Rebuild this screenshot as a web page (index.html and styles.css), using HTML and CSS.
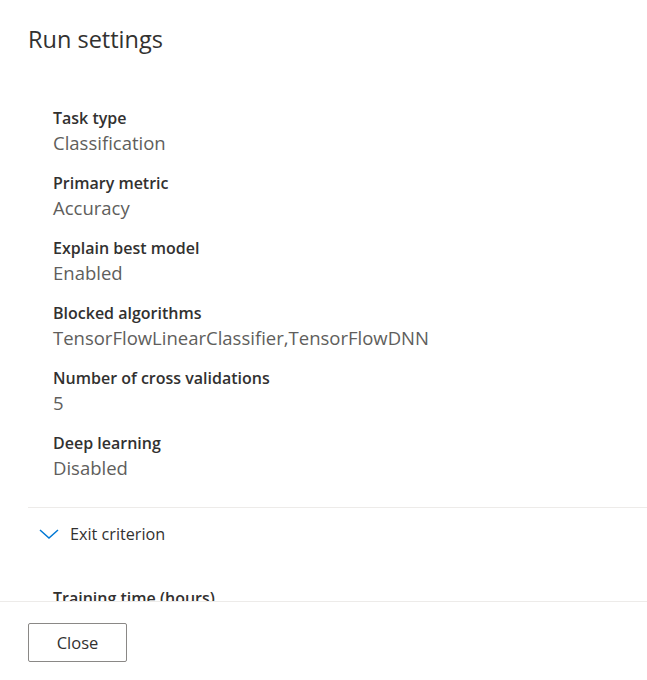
FILE: index.html
```html
<!DOCTYPE html>
<html lang="en">
<head>
<meta charset="utf-8">
<title>Run settings</title>
<link rel="stylesheet" href="styles.css">
</head>
<body>
<div class="panel">
  <div class="header">
    <h1 class="title">Run settings</h1>
  </div>
  <div class="content">
    <div class="summary">
      <div class="item">
        <div class="label">Task type</div>
        <div class="value">Classification</div>
      </div>
      <div class="item">
        <div class="label">Primary metric</div>
        <div class="value">Accuracy</div>
      </div>
      <div class="item">
        <div class="label">Explain best model</div>
        <div class="value">Enabled</div>
      </div>
      <div class="item">
        <div class="label">Blocked algorithms</div>
        <div class="value">TensorFlowLinearClassifier,TensorFlowDNN</div>
      </div>
      <div class="item">
        <div class="label">Number of cross validations</div>
        <div class="value">5</div>
      </div>
      <div class="item">
        <div class="label">Deep learning</div>
        <div class="value">Disabled</div>
      </div>
    </div>
    <div class="section">
      <div class="section-head">
        <svg class="chevron" width="20" height="10" viewBox="0 0 20 10" aria-hidden="true">
          <polyline points="1,1 10,9 19,1" fill="none" stroke="#0078d4" stroke-width="1.5"/>
        </svg>
        <span class="section-title">Exit criterion</span>
      </div>
      <div class="section-body">
        <div class="label">Training time (hours)</div>
      </div>
    </div>
  </div>
  <div class="footer">
    <button class="btn"><span class="btn-text">Close</span></button>
  </div>
</div>
</body>
</html>
```
FILE: styles.css
```css
html, body {
  margin: 0;
  padding: 0;
  background: #ffffff;
}
body {
  font-family: "Open Sans", "Noto Sans", "Liberation Sans", sans-serif;
  color: #323130;
}
.panel {
  height: 680px;
  display: flex;
  flex-direction: column;
}
.header {
  padding: 23px 28px 0;
}
.title {
  margin: 0;
  font-size: 23.5px;
  line-height: 32px;
  font-weight: 400;
  color: #323130;
}
.content {
  flex: 1;
  overflow: hidden;
  padding-left: 28px;
}
.summary {
  padding: 53px 0 0 25px;
  display: flex;
  flex-direction: column;
  gap: 17px;
}
.label {
  font-size: 16px;
  line-height: 20px;
  font-weight: 600;
  color: #323130;
  white-space: nowrap;
}
.value {
  margin-top: 2px;
  font-size: 18.5px;
  line-height: 26px;
  color: #605e5c;
  white-space: nowrap;
}
.section {
  margin-top: 26px;
  border-top: 1px solid #edebe9;
}
.section-head {
  display: flex;
  align-items: center;
  height: 52px;
  padding-left: 11px;
  gap: 11px;
}
.chevron {
  display: block;
}
.section-title {
  font-size: 16.2px;
  color: #323130;
}
.section-body {
  padding: 28px 0 0 25px;
}
.footer {
  border-top: 1px solid #edebe9;
  padding: 21px 28px 18px;
}
.btn {
  display: flex;
  align-items: center;
  justify-content: center;
  width: 99px;
  height: 39px;
  border: 1px solid #8a8886;
  border-radius: 2px;
  background: #ffffff;
  padding: 0;
  font-family: "Open Sans", "Noto Sans", sans-serif;
  color: #323130;
}
.btn-text {
  font-size: 16.5px;
  line-height: 22px;
  font-weight: 500;
}
```
